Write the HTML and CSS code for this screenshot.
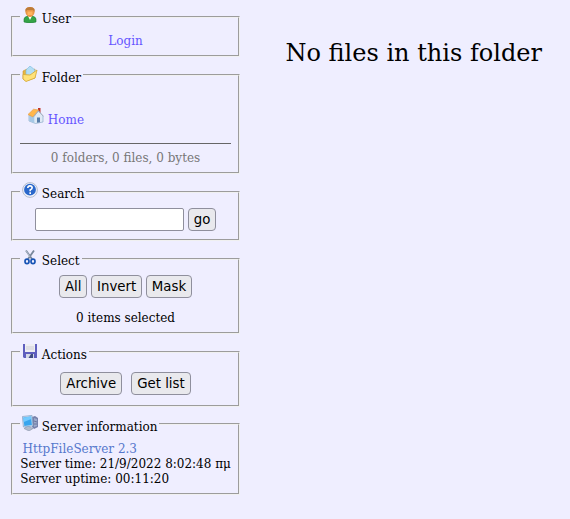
FILE: index.html
```
<!DOCTYPE html>
<html lang="en">
<head>
<meta charset="utf-8">
<title>HttpFileServer</title>
<link rel="stylesheet" href="styles.css">
</head>
<body>
<div class="panel">
  <fieldset class="user">
    <legend><svg class="icon" viewBox="0 0 16 16"><path d="M2 15V12Q2 10 6 9H10Q14 10 14 12V15Q8 17 2 15Z" fill="#35a447" stroke="#1b7c30" stroke-width=".6"/><path d="M6 9L8 13L10 9Z" fill="#fff"/><path d="M3.5 3Q4 0 8 0T12.5 3V6Q11 10 8 10T3.5 6Z" fill="#e99645"/><path d="M3.5 5V2Q5 0 8 0T12.5 2V5L11 3H5Z" fill="#bd7b39"/><path d="M5.5 4.5H10.5V8H5.5Z" fill="#ffb35f"/></svg> User</legend>
    <a class="login">Login</a>
  </fieldset>
  <fieldset class="folder">
    <legend class="low"><svg class="icon" viewBox="0 0 16 16"><path d="M1 5L5 3L7 5L13 3V12L4 15L1 13Z" fill="#e5b642" stroke="#c99830" stroke-width=".6"/><path d="M4 4L8 0L13 4L11 10L4 9Z" fill="#b4def5" stroke="#78b8dd" stroke-width=".6"/><path d="M1 8.5L8 9L15 4L13 12L4 15.5L1 13Z" fill="#ffe27a" stroke="#d6a832" stroke-width=".8"/></svg> Folder</legend>
    <a class="home"><svg class="icon" viewBox="0 0 16 16"><path d="M10 0H12.5V5H10Z" fill="#bf3529"/><path d="M1 7L6 8.5L10.3 3L15 8V14L7.5 15.5L1 13Z" fill="#dfeaf5" stroke="#8eacc9" stroke-width=".7"/><path d="M1.3 7.5L6.3 9V15L1.3 13Z" fill="#a5c8e6"/><path d="M9 9.5H12V14.2L9 14.8Z" fill="#577da9"/><path d="M0 6.5L5.5 1.2L10.8 2L5 9Z" fill="#ffb74c" stroke="#e7983a" stroke-width=".6"/><path d="M5.4 9L10.4 2.8L15.6 8.4" fill="none" stroke="#a7b0c0" stroke-width="1"/></svg> Home</a>
    <div class="stats">0 folders, 0 files, 0 bytes</div>
  </fieldset>
  <fieldset class="search">
    <legend><svg class="icon" viewBox="0 0 16 16"><circle cx="8" cy="8" r="7.4" fill="#eef1fa" stroke="#aeb5c8" stroke-width=".9"/><circle cx="8" cy="7.7" r="5.9" fill="#2a67cb"/><path d="M5.8 6Q6 3.9 8 3.9T10.2 5.8Q10.2 7 8.2 8V9.3M8.2 10.3V12" fill="none" stroke="#fff" stroke-width="1.6"/></svg> Search</legend>
    <div class="row"><input type="text"><button>go</button></div>
  </fieldset>
  <fieldset class="select">
    <legend><svg class="icon" viewBox="0 0 16 16"><path d="M4 1.5L10 10M12 1.5L6 10" stroke="#78879b" stroke-width="1.8"/><path d="M4 1.5L8 8" stroke="#c9d1dc" stroke-width=".7"/><ellipse cx="5" cy="12.4" rx="2" ry="2.2" fill="none" stroke="#1854b5" stroke-width="1.7"/><ellipse cx="11" cy="12.4" rx="2" ry="2.2" fill="none" stroke="#1854b5" stroke-width="1.7"/></svg> Select</legend>
    <div class="row"><button>All</button><button>Invert</button><button>Mask</button></div>
    <div class="count">0 items selected</div>
  </fieldset>
  <fieldset class="actions">
    <legend class="low"><svg class="icon" viewBox="0 0 16 16"><path d="M1 1H15V15H2L1 14Z" fill="#5f5fbe"/><path d="M3 1H13V9H3Z" fill="#eeeef2"/><path d="M4 4H12M4 6H12" stroke="#cfcfd5"/><path d="M4 11H12V15H4Z" fill="#d5dae7"/><path d="M9 11H11V15H6.5Z" fill="#414d82"/></svg> Actions</legend>
    <div class="row"><button>Archive</button><button>Get list</button></div>
  </fieldset>
  <fieldset class="server">
    <legend class="low"><svg class="icon" viewBox="0 0 16 16"><path d="M10 2L13 1L16 3V12L12 14L10 12Z" fill="#7781ab"/><path d="M12 3L15 4V11L12 12Z" fill="#9ba9cb"/><path d="M12 6L15 7M12 9L15 9" stroke="#56618d" stroke-width=".7"/><path d="M2 13.5L6 11L11 13.5L7 16Z" fill="#b2bccd" stroke="#8792aa" stroke-width=".6"/><path d="M.4 1.5L10 .4L11 11L1.4 12Z" fill="#c9dcee" stroke="#809fc3" stroke-width=".7"/><path d="M1.3 2.4L9.1 1.4L9.9 10L2.3 10.9Z" fill="#38a5ee"/><path d="M1.3 2.4L9.1 1.4L9.3 4L1.8 7Z" fill="#72caff"/></svg> Server information</legend>
    <a class="product">HttpFileServer 2.3</a>
    <div class="line">Server time: 21/9/2022 8:02:48 πμ</div>
    <div class="line">Server uptime: 00:11:20</div>
  </fieldset>
</div>
<main class="empty">No files in this folder</main>
</body>
</html>
```
FILE: styles.css
```
* { box-sizing: border-box; }
body {
  margin: 0;
  display: flex;
  height: 519px;
  background: #efeeff;
  color: #000;
  font: 12px/15px "DejaVu Serif", serif;
}
.panel {
  width: 229px;
  margin: 7px 0 0 11px;
  display: flex;
  flex-direction: column;
  gap: 8px;
  flex: none;
}
fieldset {
  margin: 0;
  padding: 0 7px;
  min-width: 0;
  border: 2px groove #f0f0f0;
  white-space: nowrap;
}
legend {
  height: 20px;
  line-height: 20px;
  padding: 0 2px;
}
legend.low { padding-top: 1px; }
.icon { width: 16px; height: 16px; vertical-align: baseline; }
a { color: #6655ff; display: block; }
.user { height: 50px; }
.login { text-align: center; padding-top: 7px; }
.folder { height: 109px; }
.home { padding: 23px 0 0 8px; height: 58px; line-height: 20px; }
.stats { border-top: 1px solid #666; color: #777; text-align: center; padding-top: 7px; }
.search { height: 59px; }
.select { height: 85px; }
.actions { height: 65px; }
.server { height: 81px; margin-top: -1px; }
.row { display: flex; justify-content: center; gap: 4px; }
button, input {
  height: 23px;
  margin: 0;
  border: 1px solid #8f8f9d;
  font: 13.33px/16px "DejaVu Sans", sans-serif;
}
button { border-radius: 4px; background: #e9e9ed; color: #000; padding: 0 5px; }
input { width: 149px; border-radius: 2px; background: #fff; }
.search .row { padding-top: 6px; }
.select .row { padding-top: 6px; gap: 3.6px; }
.actions .row { padding-top: 10px; gap: 9px; }
.count { text-align: center; padding-top: 13px; }
.product { color: #5577cc; padding: 8px 0 0 2.5px; }
.line { padding-left: .3px; }
.empty {
  margin: 39px 0 0 45.5px;
  font-size: 24px;
  line-height: 29px;
  white-space: nowrap;
}
```
